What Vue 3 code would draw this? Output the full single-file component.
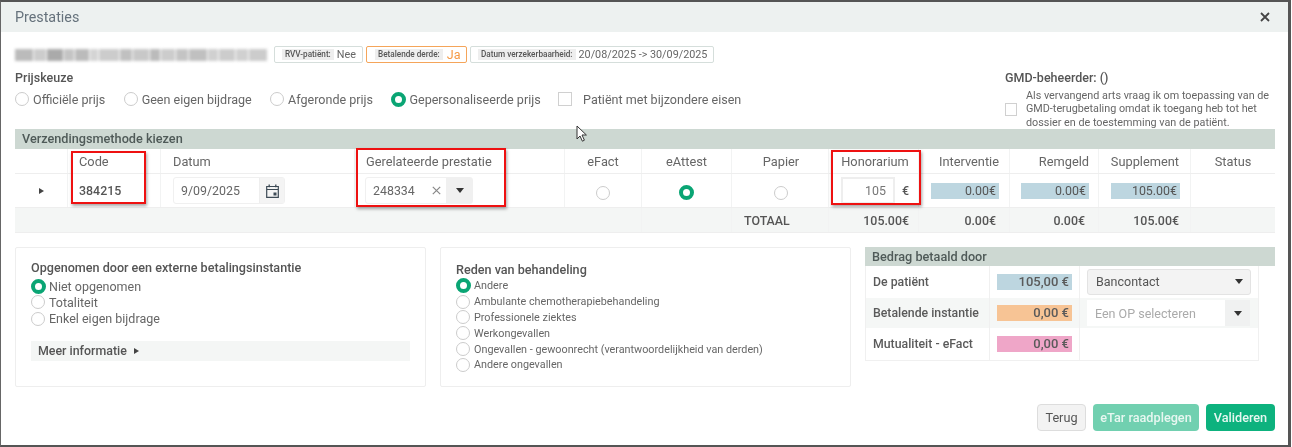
<script setup>
const blur = [
  [18,'#bbb'],[12,'#ccc'],[16,'#aaa'],[10,'#c4c4c4'],[14,'#bbb'],[8,'#d4d4d4'],[20,'#ccc'],[12,'#c0c0c0'],[16,'#c8c8c8'],[10,'#bbb'],[14,'#ccc'],[12,'#c4c4c4'],[18,'#c0c0c0'],[10,'#d0d0d0'],[16,'#ccc'],[12,'#d0d0d0'],[18,'#ccc'],[7,'#d8d8d8']
]
const priceOptions = [
  { label: 'Officiële prijs' }, { label: 'Geen eigen bijdrage' }, { label: 'Afgeronde prijs' }, { label: 'Gepersonaliseerde prijs', on: true }
]
const coverage = [
  { label: 'Niet opgenomen', on: true }, { label: 'Totaliteit' }, { label: 'Enkel eigen bijdrage' }
]
const reasons = [
  { label: 'Andere', on: true }, { label: 'Ambulante chemotherapiebehandeling' }, { label: 'Professionele ziektes' },
  { label: 'Werkongevallen' }, { label: 'Ongevallen - gewoonrecht (verantwoordelijkheid van derden)' }, { label: 'Andere ongevallen' }
]
</script>

<template>
  <div class="page">
    <div class="dialog">
      <header class="title">
        <span>Prestaties</span>
        <svg class="close" width="10" height="10" viewBox="0 0 10 10"><path d="M1 1l8 8M9 1l-8 8" stroke="#444" stroke-width="1.8" fill="none"/></svg>
      </header>

      <div class="body">
        <div class="info">
          <div class="blurred">
            <i v-for="(b, i) in blur" :key="i" :style="{ width: b[0] + 'px', background: b[1] }"></i>
          </div>
          <div class="tag tag-rvv"><b>RVV-patiënt:</b><span>Nee</span></div>
          <div class="tag tag-orange"><b>Betalende derde:</b><span>Ja</span></div>
          <div class="tag tag-date"><b>Datum verzekerbaarheid:</b><span>20/08/2025 -&gt; 30/09/2025</span></div>
        </div>

        <div class="price-row">
          <div class="price-left">
            <div class="heading">Prijskeuze</div>
            <div class="price-options">
              <label v-for="o in priceOptions" :key="o.label" class="opt">
                <span class="radio" :class="{ on: o.on }"></span>{{ o.label }}
              </label>
              <label class="opt check-opt"><span class="check big"></span>Patiënt met bijzondere eisen</label>
            </div>
          </div>
          <div class="gmd">
            <div class="heading">GMD-beheerder: ()</div>
            <div class="gmd-row">
              <span class="check"></span>
              <p>Als vervangend arts vraag ik om toepassing van de GMD-terugbetaling omdat ik toegang heb tot het dossier en de toestemming van de patiënt.</p>
            </div>
          </div>
        </div>

        <section class="table-wrap">
          <div class="band">Verzendingsmethode kiezen</div>
          <div class="grid head">
            <div></div><div class="left">Code</div><div class="left">Datum</div><div class="left">Gerelateerde prestatie</div>
            <div>eFact</div><div>eAttest</div><div>Papier</div><div>Honorarium</div>
            <div class="right">Interventie</div><div class="right">Remgeld</div><div class="right">Supplement</div><div>Status</div>
          </div>
          <div class="grid row">
            <div><span class="tri"></span></div>
            <div class="left strong">384215</div>
            <div class="left">
              <div class="date-input"><span>9/09/2025</span>
                <em>
                  <svg width="13" height="14" viewBox="0 0 13 14"><path d="M.7 2.5h11.6v10.8H.7z M.7 5.5h11.6" stroke="#3d4a55" fill="none" stroke-width="1.2"/><path d="M3.2.6v2.6M9.8.6v2.6" stroke="#3d4a55" stroke-width="1.3"/><rect x="7.5" y="8.5" width="3" height="3" fill="#3d4a55"/></svg>
                </em>
              </div>
            </div>
            <div class="left">
              <div class="combo"><span class="val">248334</span>
                <svg class="x" width="9" height="9" viewBox="0 0 9 9"><path d="M.8.8l7.4 7.4M8.2.8L.8 8.2" stroke="#888" stroke-width="1.2"/></svg>
                <em><span class="down"></span></em>
              </div>
            </div>
            <div><span class="radio lowered"></span></div>
            <div><span class="radio lowered on nudge-left"></span></div>
            <div><span class="radio lowered nudge-right"></span></div>
            <div class="fee"><span class="fee-input">105</span><span class="eur">€</span></div>
            <div class="right"><span class="amount">0.00€</span></div>
            <div class="right"><span class="amount">0.00€</span></div>
            <div class="right"><span class="amount wide">105.00€</span></div>
            <div></div>
          </div>
          <div class="grid total">
            <div></div><div></div>
            <div class="strong left-total">TOTAAL</div>
            <div class="strong right">105.00€</div>
            <div class="strong right">0.00€</div>
            <div class="strong right">0.00€</div>
            <div class="strong right">105.00€</div>
            <div></div>
          </div>
          <div class="red red-code"></div>
          <div class="red red-rel"></div>
          <div class="red red-fee"></div>
        </section>

        <div class="lower">
          <div class="card card-ext">
            <div class="card-title">Opgenomen door een externe betalingsinstantie</div>
            <label v-for="o in coverage" :key="o.label" class="line">
              <span class="radio" :class="{ on: o.on }"></span>{{ o.label }}
            </label>
            <div class="more">Meer informatie <span class="tri"></span></div>
          </div>

          <div class="card card-reason">
            <div class="card-title reason-title">Reden van behandeling</div>
            <label v-for="o in reasons" :key="o.label" class="line tight">
              <span class="radio" :class="{ on: o.on }"></span>{{ o.label }}
            </label>
          </div>

          <div class="pay">
            <div class="band">Bedrag betaald door</div>
            <div class="pay-table">
              <div class="pay-row">
                <div class="pay-name">De patiënt</div>
                <div class="pay-amt"><span class="blue">105,00 €</span></div>
                <div class="pay-ctl"><div class="select"><span>Bancontact</span><span class="down"></span></div></div>
              </div>
              <div class="pay-row alt">
                <div class="pay-name">Betalende instantie</div>
                <div class="pay-amt"><span class="orange">0,00 €</span></div>
                <div class="pay-ctl"><div class="op"><span>Een OP selecteren</span><em><span class="down"></span></em></div></div>
              </div>
              <div class="pay-row">
                <div class="pay-name">Mutualiteit - eFact</div>
                <div class="pay-amt"><span class="pink">0,00 €</span></div>
                <div class="pay-ctl"></div>
              </div>
            </div>
          </div>
        </div>

        <footer class="actions">
          <button class="btn back">Terug</button>
          <button class="btn light">eTar raadplegen</button>
          <button class="btn green">Valideren</button>
        </footer>
      </div>

      <svg class="cursor" width="12" height="18" viewBox="0 0 12 18"><path d="M1 1v13l3-3 2.4 5.2 2-1L6 10h4.4z" fill="#fff" stroke="#333" stroke-width="1"/></svg>
    </div>
  </div>
</template>

<style>
html, body { margin: 0; background: #fff; }
</style>

<style scoped>
* { box-sizing: border-box; }
.page { width: 1292px; height: 447px; overflow: hidden; font-family: Roboto, "Liberation Sans", sans-serif; font-size: 13px; color: #555; }
.dialog { position: relative; width: 1291px; height: 447px; background: #fff; border-top: 2px solid #555; border-left: 1px solid #666; border-right: 3px solid #555; border-bottom: 2px solid #555; filter: blur(0.3px); }
.title { height: 30px; background: #edf1f0; display: flex; align-items: center; justify-content: space-between; padding: 0 18px 0 14px; font-size: 14.3px; color: #66727c; }
.body { padding: 0 13px 0 14px; }
.info { height: 31px; display: flex; align-items: center; padding-top: 14px; }
.blurred { width: 253px; height: 12px; display: flex; filter: blur(1.6px); margin-right: 6px; gap: 1px; overflow: hidden; flex: none; }
.blurred i { display: block; height: 12px; flex: none; }
.tag { height: 17px; display: flex; align-items: center; border: 1px solid #d5dedb; border-radius: 2px; padding: 0 5px 0 7px; margin-right: 4px; font-size: 10.8px; color: #666; gap: 3px; white-space: nowrap; flex: none; }
.tag b { font-size: 8.2px; font-weight: 500; background: #eee; padding: 0 3px; line-height: 11px; color: #555; }
.tag-rvv { width: 89px; margin-right: 3px; }
.tag-orange { width: 101px; border-color: #f5a55a; margin-right: 3px; padding-left: 8px; font-size: 12.5px; }
.tag-orange span { color: #f59a45; margin-left: 1px; }
.tag-date { width: 244px; }
.price-row { display: flex; justify-content: space-between; height: 66px; }
.heading { font-weight: 500; font-size: 12.5px; line-height: 16px; color: #555; padding-top: 7px; height: 24px; }
.price-options { display: flex; align-items: center; height: 20px; margin-top: 2px; }
.opt { display: flex; align-items: center; gap: 4px; margin-right: 18.4px; font-size: 12.55px; color: #666; white-space: nowrap; }
.check-opt { gap: 11px; margin-left: -1px; }
.radio { display: inline-block; width: 14px; height: 14px; border-radius: 50%; border: 1px solid #ccc; flex: none; background: #fff; }
.radio.on { border: 4px solid #0aa574; width: 15px; height: 15px; margin-right: -1px; }
.radio.lowered { margin-top: 4px; }
.radio.nudge-left { margin-left: -1px; }
.radio.nudge-right { margin-left: 2px; }
.check { display: block; width: 12px; height: 13px; border: 1px solid #d0d0d0; flex: none; }
.check.big { width: 14px; height: 14px; }
.gmd { width: 270px; }
.gmd-row { display: flex; align-items: center; gap: 9px; margin-top: 2px; }
.gmd-row p { margin: 0; font-size: 10.8px; line-height: 13.4px; color: #666; width: 250px; }
.table-wrap { position: relative; width: 1260px; }
.band { height: 20px; background: #cdd8d2; font-weight: 500; font-size: 12.7px; line-height: 20px; padding-left: 7px; color: #4f5a58; }
.grid { display: grid; grid-template-columns: 53px 93px 194px 210px 77px 90px 97px 90px 91px 89px 92px 84px; text-align: center; font-size: 12.4px; }
.grid > div { border-right: 1px solid #f2f3f3; display: flex; align-items: center; justify-content: center; min-width: 0; }
.grid > div:last-child { border-right: 0; }
.grid .left { justify-content: flex-start; padding-left: 11px; }
.grid .right { justify-content: flex-end; padding-right: 10px; }
.head { height: 25px; border-bottom: 1px solid #eee; color: #666; font-size: 12.8px !important; }
.head > div:nth-child(3) { padding-left: 12px; }
.head > div:nth-child(7) { padding-left: 2px; }
.head > div:nth-child(8) { padding-left: 3px; }
.head > div:nth-child(10) { padding-right: 9px; }
.head > div:nth-child(11) { padding-right: 11px; }
.row { height: 34px; border-bottom: 1px solid #eee; }
.row > div:nth-child(10) { padding-right: 9px; }
.total { height: 25px; background: #f4f6f5; border-bottom: 1px solid #eee; grid-template-columns: 627px 90px 97px 90px 91px 89px 92px 84px; }
.total .left-total { justify-content: flex-start; padding-left: 12px; }
.total > div:nth-child(4) { padding-right: 9px; }
.total > div:nth-child(5), .total > div:nth-child(6) { padding-right: 13px; }
.total > div:nth-child(7) { padding-right: 11px; }
.strong { font-weight: 500; color: #555; }
.tri { display: inline-block; width: 0; height: 0; border-left: 5px solid #444; border-top: 3px solid transparent; border-bottom: 3px solid transparent; }
.date-input { width: 112px; height: 27px; margin-left: 1px; display: flex; border: 1px solid #f0f0f0; border-radius: 3px; align-items: center; padding-left: 7px; justify-content: space-between; color: #666; }
.date-input em { width: 25px; height: 25px; background: #f4f4f4; display: flex; align-items: center; justify-content: center; border-left: 1px solid #eee; }
.combo { width: 108px; height: 27px; display: flex; align-items: center; border: 1px solid #f0f0f0; border-radius: 3px; padding-left: 7px; color: #666; text-align: left; margin-left: -1px; }
.combo .val { width: 59px; }
.combo em { margin-left: auto; width: 26px; height: 25px; background: #f0f0f0; display: flex; align-items: center; justify-content: center; padding-left: 1px; }
.down { display: inline-block; width: 0; height: 0; border-top: 5px solid #333; border-left: 4px solid transparent; border-right: 4px solid transparent; }
.grid .fee { justify-content: flex-start; padding-left: 12px; }
.fee-input { width: 54px; height: 27px; border: 2px solid #eee; text-align: right; padding-right: 7px; line-height: 23px; color: #777; }
.eur { margin-left: 7px; font-weight: 500; }
.amount { display: block; width: 68px; height: 16px; line-height: 16px; background: #bdd6e0; text-align: right; padding-right: 3px; }
.amount.wide { width: 69px; }
.red { position: absolute; border: 2px solid #ee1111; box-shadow: 1px 2px 3px rgba(0,0,0,.35); pointer-events: none; }
.red-code { left: 56px; top: 22px; width: 75px; height: 53px; }
.red-rel { left: 341px; top: 19px; width: 150px; height: 59px; }
.red-fee { left: 816px; top: 21px; width: 90px; height: 55px; }
.lower { display: flex; margin-top: 14px; height: 140px; }
.card { height: 140px; border: 1px solid #eee; border-radius: 2px; }
.card-ext { width: 411px; padding: 11px 15px; margin-right: 14px; }
.card-reason { width: 411px; padding: 14px 15px; margin-right: 14px; }
.card-title { font-weight: 500; font-size: 12.6px; line-height: 17px; margin-bottom: 2px; color: #555; }
.reason-title { line-height: 16px; margin-bottom: 0; }
.line { display: flex; align-items: center; gap: 4px; height: 16.3px; font-size: 12.5px; color: #666; }
.line.tight { height: 15.8px; font-size: 10.8px; }
.more { margin-top: 14px; height: 20px; background: #f4f6f5; padding-left: 7px; font-weight: 500; font-size: 12.4px; line-height: 19px; display: flex; align-items: center; gap: 7px; }
.pay { width: 410px; }
.pay .band { height: 19px; line-height: 19px; }
.pay-table { width: 394px; border-bottom: 1px solid #f0f0f0; border-right: 1px solid #f0f0f0; }
.pay-row { display: grid; grid-template-columns: 124px 90px 1fr; height: 32px; border-left: 1px solid #f0f0f0; }
.pay-row.alt { background: #f5f7f6; height: 30px; }
.pay-row > div { display: flex; align-items: center; }
.pay-name { padding-left: 7px; font-weight: 500; font-size: 12.3px; color: #5a5a5a; border-right: 1px solid #f0f0f0; }
.pay-amt { justify-content: center; border-right: 1px solid #f0f0f0; }
.pay-amt span { display: block; width: 75px; height: 16px; line-height: 16px; text-align: right; padding-right: 3px; font-weight: 500; color: #5a5a5a; }
.blue { background: #bdd6e0; } .orange { background: #f7c495; } .pink { background: #efa6c8; }
.pay-ctl { padding-left: 7px; }
.select { width: 164px; height: 26px; background: #f3f3f3; border: 1px solid #e3e3e3; border-radius: 3px; display: flex; align-items: center; justify-content: space-between; padding: 0 7px 2px 8px; font-size: 12.5px; }
.op { width: 163px; height: 26px; background: #fff; display: flex; align-items: center; justify-content: space-between; padding-left: 8px; color: #aaa; font-size: 12.5px; }
.op em { width: 25px; height: 26px; background: #f0f1f1; display: flex; align-items: center; justify-content: center; }
.actions { display: flex; justify-content: flex-end; gap: 7px; margin-top: 17px; width: 1260px; }
.btn { height: 27px; border-radius: 4px; border: 1px solid transparent; font: 500 12.7px Roboto, sans-serif; padding: 0; }
.back { width: 49px; background: #f3f3f3; border-color: #ddd; color: #555; font-weight: 400; }
.light { width: 106px; background: #71d0b0; color: #e8f7f1; }
.green { width: 69px; background: #0db27e; color: #e6f7f1; }
.cursor { position: absolute; left: 575px; top: 123px; }
</style>
